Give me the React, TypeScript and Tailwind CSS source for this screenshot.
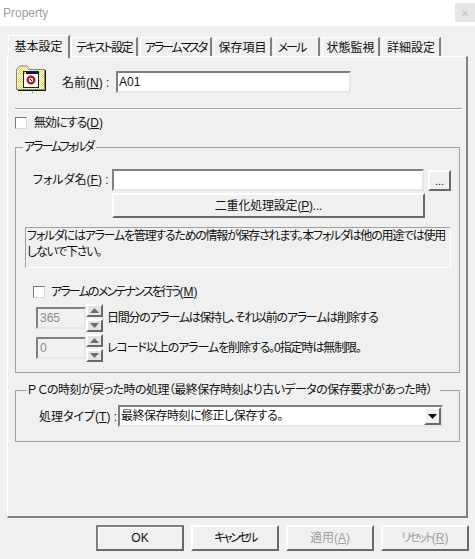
import React from "react";

const FONT = "font-['Liberation_Sans','Noto_Sans_CJK_JP',sans-serif] [font-feature-settings:'palt']";
const SUNKEN = "border-2 border-t-[#808080] border-l-[#808080] border-b-[#e6e6e6] border-r-[#e6e6e6]";
const RAISED = "border-2 border-t-white border-l-white border-b-[#696969] border-r-[#696969]";

function Tab({ label, w, active, extra = "" }: { label: string; w: string; active?: boolean; extra?: string }) {
  return (
    <div
      className={
        active
          ? `${w} ${extra} h-[23px] -mt-[1px] mr-[1px] relative z-10 bg-[#f0f0f0] border-l border-t border-white border-r-2 border-r-[#808080] flex items-center justify-center whitespace-nowrap`
          : `${w} ${extra} h-[20px] mt-[1px] mr-[2px] border-l border-t border-white border-r-2 border-r-[#808080] flex items-center justify-center whitespace-nowrap`
      }
    >
      {label}
    </div>
  );
}

function Checkbox() {
  return <div className="w-[12px] h-[12px] shrink-0 bg-white border border-t-[#7a7a7a] border-l-[#7a7a7a] border-b-[#d8d8d8] border-r-[#d8d8d8]" />;
}

function SpinBtn({ up }: { up?: boolean }) {
  return (
    <div className={`h-[13px] ${RAISED} bg-[#e4e4e4] flex items-center justify-center`}>
      <svg width="9" height="5" viewBox="0 0 9 5">
        <path d={up ? "M4.5 0 L9 5 L0 5 Z" : "M0 0 L9 0 L4.5 5 Z"} fill="#6d6d6d" />
      </svg>
    </div>
  );
}

function Spin({ value }: { value: string }) {
  return (
    <div className="flex items-center w-[67px] h-[28px] shrink-0">
      <div className={`w-[50px] h-[22px] ${SUNKEN} bg-[#f0f0f0] text-[#8c8c8c] pl-[2px] leading-[18px]`}>{value}</div>
      <div className="w-[17px] h-[28px] flex flex-col justify-between">
        <SpinBtn up />
        <SpinBtn />
      </div>
    </div>
  );
}

function Btn({ label, disabled, dark }: { label: React.ReactNode; disabled?: boolean; dark?: boolean }) {
  return (
    <div
      className={`w-[88px] h-[26px] bg-[#f0f0f0] flex items-center justify-center ${
        dark ? "border-2 border-[#696969] border-t-[#808080] border-l-[#808080] shadow-[inset_1px_1px_0_#fff]" : RAISED
      } ${disabled ? "text-[#a0a0a0]" : "text-[#111]"}`}
    >
      {label}
    </div>
  );
}

function FolderIcon() {
  return (
    <svg width="30" height="28" viewBox="0 0 30 28" className="shrink-0">
      <defs>
        <pattern id="dither" width="2" height="2" patternUnits="userSpaceOnUse">
          <rect width="2" height="2" fill="#fdfdf0" />
          <rect width="1" height="1" fill="#e8d84a" />
          <rect x="1" y="1" width="1" height="1" fill="#e8d84a" />
        </pattern>
      </defs>
      <path d="M0.5 4.5 L3.5 1 L11 1 L13.5 4.5 L28.5 4.5 L28.5 24.5 L0.5 24.5 Z" fill="url(#dither)" stroke="#8a8a70" />
      <path d="M29 5 L30 5 L30 26 L2 26 L2 25 L29 25 Z" fill="#111" />
      <rect x="7.5" y="6.5" width="15" height="16" fill="#fff" stroke="#222" />
      <rect x="8" y="7" width="14" height="2" fill="#101080" />
      <rect x="8" y="7" width="2" height="2" fill="#e8d040" />
      <circle cx="15" cy="15" r="4.2" fill="#c81818" stroke="#701010" strokeWidth="0.6" />
      <circle cx="15" cy="15" r="2.2" fill="#f4f4f4" />
      <path d="M14 14 L16 16" stroke="#111" />
      <rect x="16" y="27" width="1" height="1" fill="#00a000" />
    </svg>
  );
}

export default function App() {
  return (
    <div className={`w-[475px] h-[559px] bg-[#f0f0f0] overflow-hidden flex flex-col text-[12px] leading-[16px] text-[#111] ${FONT}`}>
      {/* Title bar */}
      <div className="h-[26px] shrink-0 bg-white flex justify-between items-start">
        <span className="ml-[3px] mt-[5px] text-[#a0a0a0] text-[12px]">Property</span>
        <div className="w-[20px] h-[19px] mt-[3px] bg-[#e6e6e6] flex items-center justify-center text-[#c4c4c4] text-[11px] font-bold">×</div>
      </div>

      {/* Tabs */}
      <div className="h-[21px] mt-[10px] pl-[8px] flex shrink-0 items-start">
        <Tab label="基本設定" w="w-[62px]" active />
        <Tab label="テキスト設定" w="w-[67px]" extra="tracking-[-1.7px]" />
        <Tab label="アラームマスタ" w="w-[72px]" extra="tracking-[-2.1px]" />
        <Tab label="保存項目" w="w-[58px]" />
        <Tab label="メール" w="w-[46px]" extra="tracking-[-2px] pr-[10px]" />
        <Tab label="状態監視" w="w-[58px]" />
        <Tab label="詳細設定" w="w-[59px]" />
      </div>

      {/* Panel */}
      <div className="ml-[7px] w-[461px] h-[462px] shrink-0 -mt-[1px] border-l border-t border-white border-r-2 border-r-[#808080] border-b-2 border-b-[#808080] pl-[7px] pr-[6px] flex flex-col">
        {/* Name row */}
        <div className="flex items-start h-[28px] mt-[8px] pl-[1px]">
          <FolderIcon />
          <span className="ml-[16px] mt-[10px] w-[54px] whitespace-nowrap">名前(<u>N</u>) :</span>
          <div className={`w-[235px] mt-[6px] h-[22px] ${SUNKEN} bg-white pl-[1px] leading-[18px]`}>A01</div>
        </div>

        {/* Separator */}
        <div className="mt-[15px] w-[447px] h-[2px] bg-[#a0a0a0] border-b border-b-white shrink-0" />

        {/* Disable */}
        <div className="flex items-center mt-[5px] h-[16px]">
          <Checkbox />
          <span className="ml-[7px]"><span className="tracking-[-1px]">無効にする</span>(<u>D</u>)</span>
        </div>

        {/* Alarm folder group */}
        <fieldset className="mt-[8px] w-[445px] h-[234px] border border-[#a0a0a0] pl-[9px] pr-[8px] shrink-0">
          <legend className="-ml-[2px] pl-[1px] pr-[3px] h-[16px] leading-[16px] tracking-[-2px]">アラームフォルダ</legend>
          <div className="flex mt-[14px] h-[22px]">
            <div className="ml-[8px] w-[79px] pt-[3px] whitespace-nowrap">フォルダ名(<u>F</u>) :</div>
            <div className="flex items-start">
              <div className={`w-[312px] h-[22px] ${SUNKEN} bg-white`} />
              <div className={`ml-[4px] mt-[1px] w-[23px] h-[21px] ${RAISED} bg-[#f0f0f0] flex items-center justify-center text-[11px]`}>...</div>
            </div>
          </div>
          <div className={`flex justify-center mt-[2px] ml-[87px] w-[313px] h-[25px] bg-[#f0f0f0] ${RAISED} items-center tracking-[-0.2px]`}>
            二重化処理設定(<u>P</u>)...
          </div>
          <div className="mt-[9px] w-[426px] h-[41px] border border-t-[#a0a0a0] border-l-[#a0a0a0] border-b-white border-r-white pl-[1px] whitespace-pre-line tracking-[-1.25px]">
            {"フォルダにはアラームを管理するための情報が保存されます。本フォルダは他の用途では使用\nしないで下さい。"}
          </div>

          <div className="flex items-center mt-[16px] h-[16px] pl-[8px]">
            <Checkbox />
            <span className="ml-[6px]"><span className="tracking-[-1.8px]">アラームのメンテナンスを行う</span>(<u>M</u>)</span>
          </div>

          <div className="flex items-center mt-[4px] h-[28px] pl-[11px]">
            <Spin value="365" />
            <span className="ml-[4px] whitespace-nowrap tracking-[-1.25px]">日間分のアラームは保持し、それ以前のアラームは削除する</span>
          </div>
          <div className="flex items-center mt-[2px] h-[28px] pl-[11px]">
            <Spin value="0" />
            <span className="ml-[4px] whitespace-nowrap tracking-[-1.1px]">レコード以上のアラームを削除する。0指定時は無制限。</span>
          </div>
        </fieldset>

        {/* PC clock group */}
        <fieldset className="mt-[9px] w-[445px] h-[60px] border border-[#a0a0a0] shrink-0">
          <legend className="ml-[10px] pl-[1px] pr-[8px] h-[16px] leading-[16px] whitespace-nowrap tracking-[-0.55px]">Ｐ Ｃの時刻が戻った時の処理（最終保存時刻より古いデータの保存要求があった時）</legend>
          <div className="flex items-start mt-[7px] pl-[23px]">
            <span className="mt-[4px] w-[79px] whitespace-nowrap">処理タイプ(<u>T</u>) :</span>
            <div className={`w-[325px] h-[22px] ${SUNKEN} bg-white flex items-center justify-between`}>
              <span className="pl-[1px] tracking-[-0.5px]">最終保存時刻に修正し保存する。</span>
              <div className={`w-[17px] h-[18px] ${RAISED} bg-[#f0f0f0] flex items-center justify-center`}>
                <svg width="9" height="5" viewBox="0 0 9 5"><path d="M0 0 L9 0 L4.5 5 Z" fill="#111" /></svg>
              </div>
            </div>
          </div>
        </fieldset>
      </div>

      {/* Footer */}
      <div className="flex justify-end gap-[7px] mt-[7px] pr-[6px]">
        <Btn label="OK" dark />
        <Btn label={<span className="tracking-[-2.5px]">キャンセル</span>} />
        <Btn label={<span>適用(<u>A</u>)</span>} disabled />
        <Btn label={<span><span className="tracking-[-2.4px]">リセット</span>(<u>R</u>)</span>} disabled />
      </div>
    </div>
  );
}
